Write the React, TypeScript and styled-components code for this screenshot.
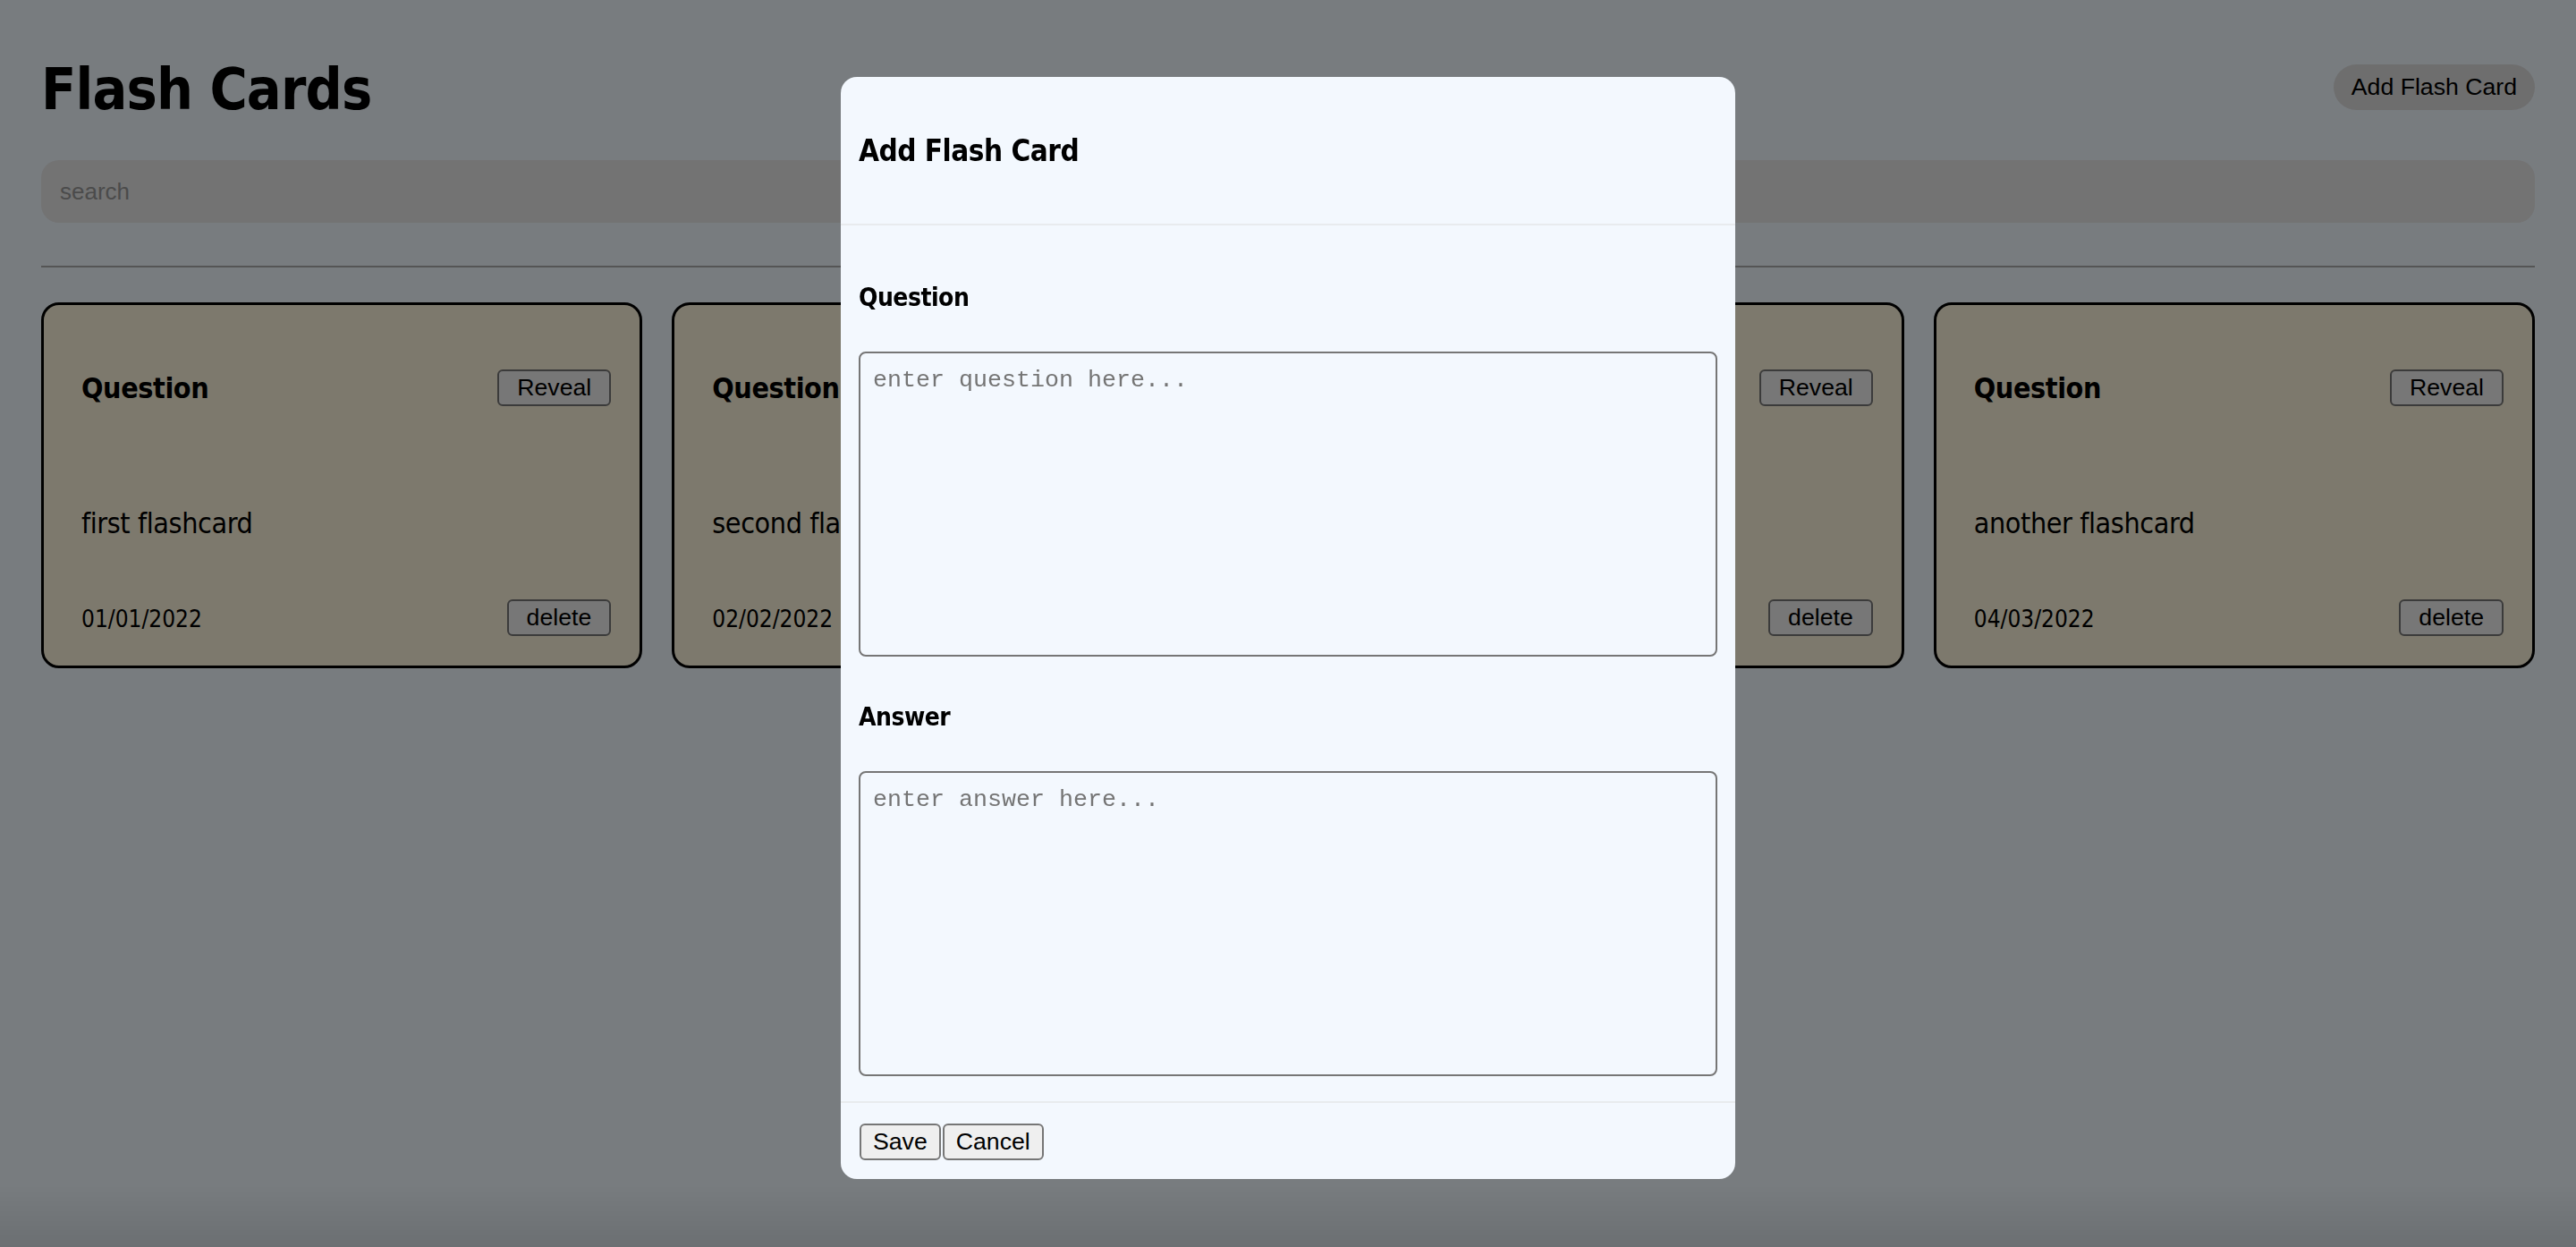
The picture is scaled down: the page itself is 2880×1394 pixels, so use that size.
import React from "react";
import styled, { createGlobalStyle } from "styled-components";

const TAHOMA = `"DejaVu Sans Condensed", "DejaVu Sans", Verdana, sans-serif`;
const ARIAL = `"Liberation Sans", Arial, sans-serif`;
const MONO = `"Liberation Mono", "Courier New", monospace`;

const GlobalStyle = createGlobalStyle`
  html, body {
    margin: 0;
    padding: 0;
    background: #f0f8ff;
  }
  body {
    min-height: 100vh;
    font-family: ${TAHOMA};
    color: #000;
  }
  * {
    box-sizing: border-box;
  }
`;

const Page = styled.div`
  padding: 68px 46px 0;
`;

const Header = styled.header`
  display: flex;
  align-items: center;
  justify-content: space-between;
  height: 64px;
`;

const Title = styled.h1`
  margin: 0;
  font-family: ${TAHOMA};
  font-stretch: condensed;
  font-size: 64px;
  line-height: 1;
  font-weight: 700;
  letter-spacing: -0.8px;
`;

const PillButton = styled.button`
  height: 51px;
  margin-bottom: 5px;
  padding: 0 20px;
  border: none;
  border-radius: 26px;
  background: #dcdcdc;
  font-family: ${ARIAL};
  font-size: 26.67px;
  color: #000;
`;

const Search = styled.input`
  display: block;
  width: 100%;
  height: 70px;
  margin-top: 47px;
  padding: 0 21px;
  border: none;
  border-radius: 20px;
  background: #e6e6e6;
  font-family: ${ARIAL};
  font-size: 26px;
  outline: none;

  &::placeholder {
    color: #979797;
  }
`;

const Divider = styled.hr`
  margin: 48px 0 0;
  border: none;
  border-top: 2px solid #aaa;
`;

const CardGrid = styled.div`
  display: grid;
  grid-template-columns: repeat(4, 1fr);
  gap: 33px;
  margin-top: 39px;
`;

const Card = styled.div`
  display: flex;
  flex-direction: column;
  height: 409px;
  padding: 72px 32px 32px 42px;
  border: 3px solid #000;
  border-radius: 20px;
  background: #faf2da;
`;

const CardRow = styled.div`
  display: flex;
  align-items: center;
  justify-content: space-between;
  height: 41px;
`;

const CardHeading = styled.h3`
  margin: 0;
  font-family: ${TAHOMA};
  font-stretch: condensed;
  font-size: 32px;
  font-weight: 700;
  letter-spacing: -0.4px;
`;

const CardText = styled.p`
  margin: 111px 0 65px;
  font-family: ${TAHOMA};
  font-stretch: condensed;
  font-size: 32px;
  line-height: 40px;
  letter-spacing: -0.4px;
`;

const CardDate = styled.span`
  margin-top: 2px;
  font-family: ${TAHOMA};
  font-stretch: condensed;
  font-size: 26px;
`;

const PlainButton = styled.button<{ $pad?: number }>`
  height: 41px;
  padding: 0 ${(p) => p.$pad ?? 13}px;
  border: 2px solid #767676;
  border-radius: 6px;
  background: #efefef;
  font-family: ${ARIAL};
  font-size: 26.67px;
  color: #000;
`;

const Backdrop = styled.div`
  position: fixed;
  inset: 0;
  background:
    linear-gradient(to bottom, transparent calc(100% - 70px), rgba(0, 0, 0, 0.1)),
    rgba(0, 0, 0, 0.5);
`;

const Dialog = styled.div`
  position: fixed;
  top: 86px;
  left: 50%;
  width: 1000px;
  margin-left: -500px;
  border-radius: 18px;
  background: #f3f8fe;
  overflow: hidden;
`;

const DialogHeader = styled.div`
  display: flex;
  align-items: center;
  height: 166px;
  padding: 0 20px;
  border-bottom: 2px solid #e8ebee;
`;

const DialogTitle = styled.h4`
  margin: 0;
  font-family: ${TAHOMA};
  font-stretch: condensed;
  font-size: 33px;
  font-weight: 700;
  letter-spacing: -0.5px;
`;

const DialogBody = styled.div`
  padding: 13px 20px 28px;
`;

const Field = styled.div`
  margin-top: 51px;
`;

const Label = styled.label`
  display: block;
  font-family: ${TAHOMA};
  font-stretch: condensed;
  font-size: 28px;
  font-weight: 700;
  line-height: 34px;
  letter-spacing: -0.5px;
  margin-bottom: 43px;
`;

const TextArea = styled.textarea`
  display: block;
  width: 100%;
  height: 341px;
  padding: 15px 14px;
  border: 2px solid #767676;
  border-radius: 8px;
  background: transparent;
  font-family: ${MONO};
  font-size: 26.67px;
  resize: none;
  outline: none;

  &::placeholder {
    color: #757575;
  }
`;

const DialogFooter = styled.div`
  display: flex;
  gap: 2px;
  padding: 23px 20px 21px 21px;
  border-top: 2px solid #e8ebee;
`;

const cards = [
  { text: "first flashcard", date: "01/01/2022" },
  { text: "second flashcard", date: "02/02/2022" },
  { text: "third flashcard", date: "03/03/2022" },
  { text: "another flashcard", date: "04/03/2022" },
];

export default function App() {
  return (
    <>
      <GlobalStyle />
      <Page>
        <Header>
          <Title>Flash Cards</Title>
          <PillButton>Add Flash Card</PillButton>
        </Header>
        <Search placeholder="search" />
        <Divider />
        <CardGrid>
          {cards.map((c) => (
            <Card key={c.date}>
              <CardRow>
                <CardHeading>Question</CardHeading>
                <PlainButton $pad={20}>Reveal</PlainButton>
              </CardRow>
              <CardText>{c.text}</CardText>
              <CardRow>
                <CardDate>{c.date}</CardDate>
                <PlainButton $pad={20}>delete</PlainButton>
              </CardRow>
            </Card>
          ))}
        </CardGrid>
      </Page>
      <Backdrop />
      <Dialog>
        <DialogHeader>
          <DialogTitle>Add Flash Card</DialogTitle>
        </DialogHeader>
        <DialogBody>
          <Field>
            <Label>Question</Label>
            <TextArea placeholder="enter question here..." />
          </Field>
          <Field>
            <Label>Answer</Label>
            <TextArea placeholder="enter answer here..." />
          </Field>
        </DialogBody>
        <DialogFooter>
          <PlainButton>Save</PlainButton>
          <PlainButton>Cancel</PlainButton>
        </DialogFooter>
      </Dialog>
    </>
  );
}
